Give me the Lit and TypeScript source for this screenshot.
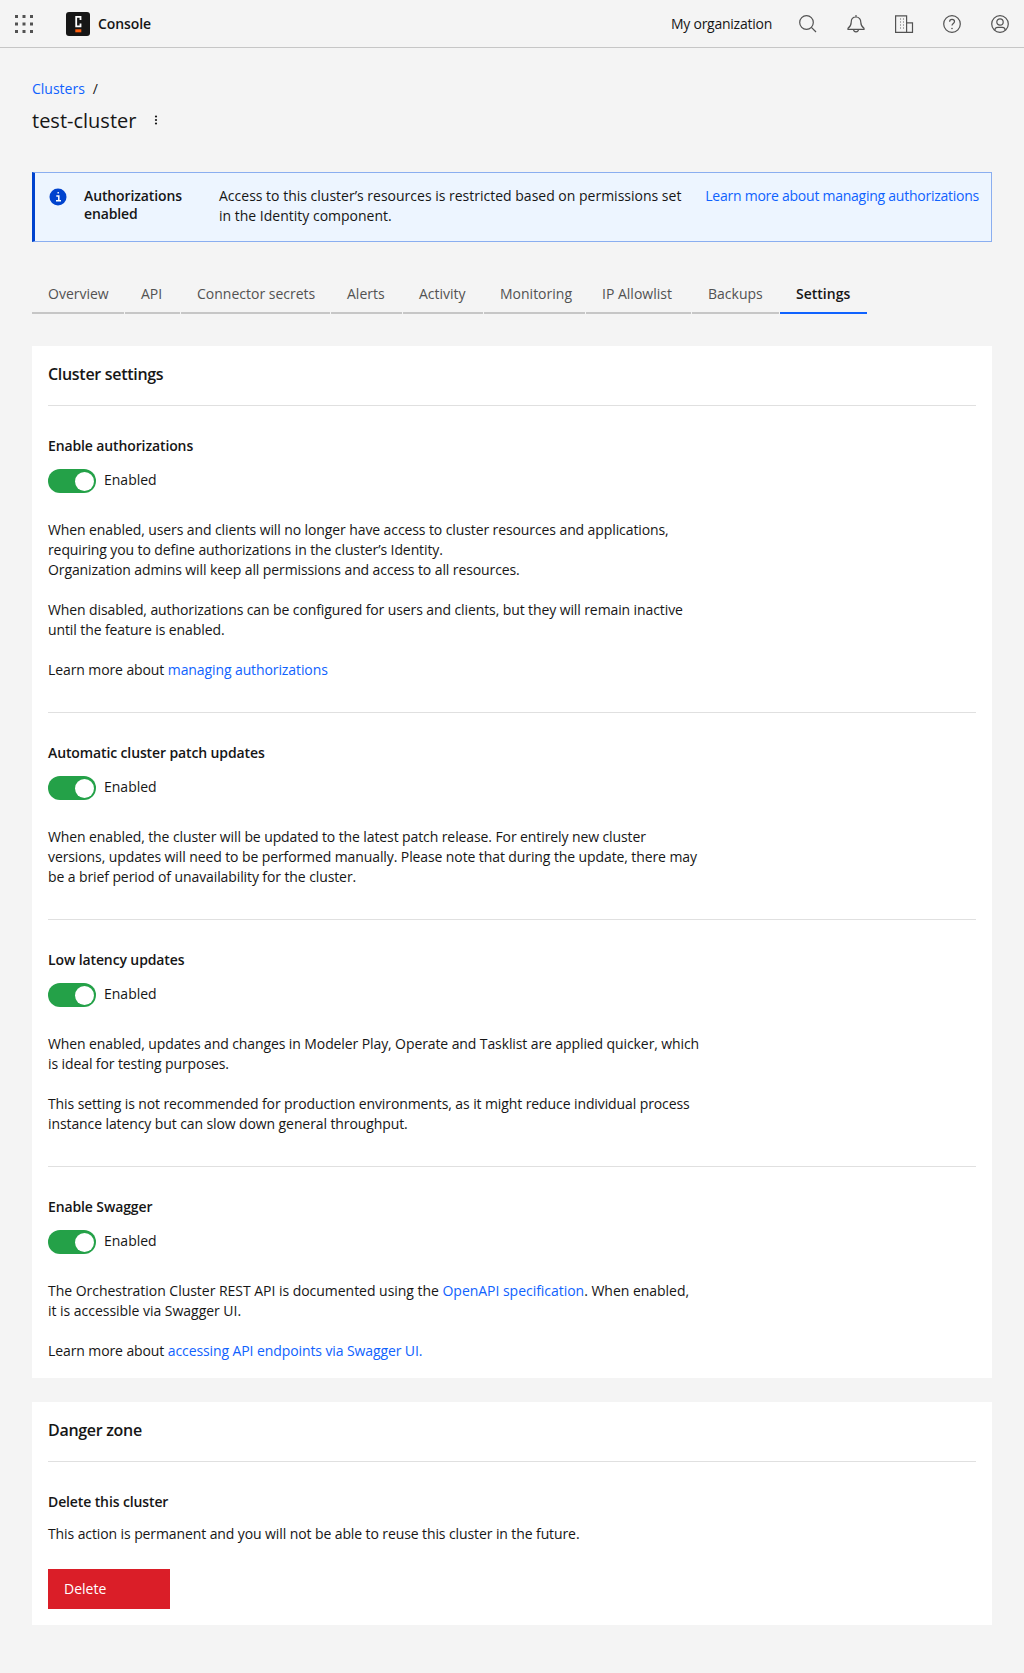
import { LitElement, html, css, svg } from "lit";
import { customElement } from "lit/decorators.js";

// tab widths are read off the reference, the fallback font does not give them
const tabs: [string, number][] = [
	["Overview", 92],
	["API", 55],
	["Connector secrets", 149],
	["Alerts", 71],
	["Activity", 80],
	["Monitoring", 101],
	["IP Allowlist", 105],
	["Backups", 87],
	["Settings", 87],
];

const icon = (body: unknown, size = 20) => html`<svg class="icon" width=${size} height=${size} viewBox="0 0 20 20" fill="none" stroke="#525252" stroke-width="1.2">${body}</svg>`;

@customElement("app-root")
export class AppRoot extends LitElement {
	static styles = css`
		:host {
			display: block;
			min-height: 100vh;
			background: #f4f4f4;
			color: #161616;
			font-family: "Open Sans", Roboto, "Liberation Sans", sans-serif;
			font-size: 14px;
			line-height: 20px;
			letter-spacing: -0.1px;
		}
		a { color: #0f62fe; text-decoration: none; }
		.topbar {
			display: flex;
			align-items: center;
			height: 47px;
			border-bottom: 1px solid #c6c6c6;
		}
		.grid-btn { width: 48px; display: flex; justify-content: center; }
		.logo {
			display: flex;
			align-items: center;
			justify-content: center;
			margin-left: 18px;
			width: 24px;
			height: 24px;
			border-radius: 3px;
			background: #161616;
		}
		.name { margin-left: 8px; font-weight: 600; }
		.spacer { flex: 1; }
		.org { margin-right: 12px; letter-spacing: -0.25px; }
		.tool { align-self: flex-start; width: 48px; height: 48px; display: flex; align-items: center; justify-content: center; }
		main { padding: 0 32px 48px; }
		.crumbs { display: flex; gap: 8px; padding-top: 31px; height: 20px; letter-spacing: 0; }
		.title-row { display: flex; align-items: center; gap: 18px; margin-top: 6px; height: 32px; }
		h1 { margin: 0; font-size: 20px; font-weight: 400; line-height: 32px; letter-spacing: 0; }
		.notice {
			display: flex;
			box-sizing: border-box;
			height: 70px;
			margin-top: 35px;
			background: #edf5ff;
			border: 1px solid #8aaef0;
			border-left: 3px solid #0043ce;
		}
		.notice .i { margin: 15px 0 0 14px; flex: none; }
		.notice b { margin: 14px 0 0 17px; width: 135px; flex: none; font-weight: 600; line-height: 18px; letter-spacing: -0.12px; }
		.notice p { margin: 13px 0 0 0; white-space: nowrap; line-height: 20px; letter-spacing: 0; }
		.notice a { margin: 13px 12px 0 auto; white-space: nowrap; letter-spacing: -0.25px; }
		.tabs { display: flex; gap: 1px; margin-top: 33px; letter-spacing: 0; }
		.tab {
			box-sizing: border-box;
			height: 39px;
			padding: 9px 0 0 16px;
			color: #525252;
			border-bottom: 2px solid #c6c6c6;
			white-space: nowrap;
		}
		.tab.active { color: #161616; font-weight: 600; border-bottom-color: #0f62fe; }
		.card { margin-top: 32px; padding: 0 16px; background: #fff; }
		.card + .card { margin-top: 24px; }
		.card-head { height: 60px; box-sizing: border-box; padding-top: 18px; border-bottom: 1px solid #e0e0e0; font-size: 16px; font-weight: 600; line-height: 20px; letter-spacing: -0.3px; }
		.section { padding: 30px 0 32px; border-bottom: 1px solid #e0e0e0; }
		.section.last { border-bottom: 0; padding-bottom: 17px; }
		.section.danger { padding-bottom: 16px; }
		h3 { margin: 0; font-size: 14px; font-weight: 600; line-height: 20px; letter-spacing: -0.12px; }
		.toggle-row { display: flex; align-items: center; gap: 8px; margin-top: 13px; height: 24px; letter-spacing: 0; }
		.toggle-row span:last-child { padding-bottom: 2px; }
		.toggle { position: relative; width: 48px; height: 24px; border-radius: 12px; background: #24a148; }
		.toggle::after { content: ""; position: absolute; right: 2.5px; top: 2.5px; width: 19px; height: 19px; border-radius: 50%; background: #fff; }
		.body { margin: 27px 0 0; white-space: nowrap; }
		.body + .body { margin-top: 20px; }
		.body.wide { letter-spacing: -0.03px; }
		.danger-text { margin: 12px 0 0; }
		.delete {
			display: block;
			width: 122px;
			height: 40px;
			box-sizing: border-box;
			margin-top: 25px;
			padding: 0 16px;
			border: 0;
			background: #da1e28;
			color: #fff;
			font: inherit;
			letter-spacing: 0;
			text-align: left;
		}
	`;

	private toggle() {
		return html`<div class="toggle-row"><span class="toggle"></span><span>Enabled</span></div>`;
	}

	render() {
		return html`
			<header class="topbar">
				<div class="grid-btn">
					<svg width="20" height="20" viewBox="0 0 20 20" fill="#525252">
						${[1, 8.5, 16].map((y) => [1, 8.5, 16].map((x) => svg`<rect x=${x} y=${y} width="3" height="3"></rect>`))}
					</svg>
				</div>
				<div class="logo">
					<svg width="12" height="20" viewBox="0 0 12 20">
						<path d="M8.500 6V2.900H4.200V12.400H8.500V9.500" fill="none" stroke="#fff" stroke-width="1.800"></path>
						<rect x="3.300" y="15.300" width="6" height="3" fill="#fc5d0d"></rect>
					</svg>
				</div>
				<span class="name">Console</span>
				<span class="spacer"></span>
				<span class="org">My organization</span>
				<span class="tool">${icon(svg`<circle cx="8.500" cy="8.500" r="6.800"></circle><path d="M13.400 13.400L18 18"></path>`)}</span>
				<span class="tool">${icon(svg`<path d="M10 1v2M10 3c-3.200 0-4.800 2.400-4.800 5.200 0 3-.9 4.400-3.200 6.100v1h16v-1c-2.300-1.700-3.200-3.100-3.200-6.100C14.800 5.400 13.200 3 10 3zM7.500 15.300a2.500 2.500 0 0 0 5 0"></path>`)}</span>
				<span class="tool">${icon(svg`<path d="M1.600 1.800h11v16.500h-11zM12.600 8.800H18.500v9.500H12.600M6 5h.9M9 5h.9M6 8h.9M9 8h.9M6 11h.9M9 11h.9M6 14h.9M9 14h.9"></path>`)}</span>
				<span class="tool">${icon(svg`<circle cx="10" cy="10" r="8.300"></circle><path d="M7.600 7.800c0-1.500 1-2.400 2.400-2.400s2.500.9 2.500 2.200c0 1.800-2.500 2-2.500 4"></path><circle cx="10" cy="14.500" r=".8" fill="#525252" stroke="none"></circle>`)}</span>
				<span class="tool">${icon(svg`<circle cx="10" cy="10" r="8.300"></circle><circle cx="10" cy="8" r="3.200"></circle><path d="M4.800 16.300c0-2 1.200-3 3-3h4.400c1.800 0 3 1 3 3"></path>`)}</span>
			</header>
			<main>
				<div class="crumbs"><a href="#">Clusters</a><span>/</span></div>
				<div class="title-row">
					<h1>test-cluster</h1>
					<svg width="4" height="12" viewBox="0 0 4 12" fill="#161616"><circle cx="2" cy="1.500" r="1.100"></circle><circle cx="2" cy="5" r="1.100"></circle><circle cx="2" cy="8.500" r="1.100"></circle></svg>
				</div>
				<div class="notice">
					<svg class="i" width="18" height="18" viewBox="0 0 18 18">
						<circle cx="9" cy="9" r="8.500" fill="#0043ce"></circle>
						<path d="M7.300 8h2.500v4.500M7 12.700h5M8.500 4.800h1.400" stroke="#fff" stroke-width="1.500" fill="none"></path>
					</svg>
					<b>Authorizations enabled</b>
					<p>Access to this cluster’s resources is restricted based on permissions set<br />in the Identity component.</p>
					<a href="#">Learn more about managing authorizations</a>
				</div>
				<nav class="tabs">
					${tabs.map(([t, w]) => html`<div class="tab ${t === "Settings" ? "active" : ""}" style="width:${w}px">${t}</div>`)}
				</nav>
				<section class="card">
					<div class="card-head">Cluster settings</div>
					<div class="section">
						<h3>Enable authorizations</h3>
						${this.toggle()}
						<p class="body">When enabled, users and clients will no longer have access to cluster resources and applications,<br />requiring you to define authorizations in the cluster’s Identity.<br />Organization admins will keep all permissions and access to all resources.</p>
						<p class="body">When disabled, authorizations can be configured for users and clients, but they will remain inactive<br />until the feature is enabled.</p>
						<p class="body">Learn more about <a href="#">managing authorizations</a></p>
					</div>
					<div class="section">
						<h3>Automatic cluster patch updates</h3>
						${this.toggle()}
						<p class="body">When enabled, the cluster will be updated to the latest patch release. For entirely new cluster<br />versions, updates will need to be performed manually. Please note that during the update, there may<br />be a brief period of unavailability for the cluster.</p>
					</div>
					<div class="section">
						<h3>Low latency updates</h3>
						${this.toggle()}
						<p class="body">When enabled, updates and changes in Modeler Play, Operate and Tasklist are applied quicker, which<br />is ideal for testing purposes.</p>
						<p class="body">This setting is not recommended for production environments, as it might reduce individual process<br />instance latency but can slow down general throughput.</p>
					</div>
					<div class="section last">
						<h3>Enable Swagger</h3>
						${this.toggle()}
						<p class="body wide">The Orchestration Cluster REST API is documented using the <a href="#">OpenAPI specification</a>. When enabled,<br />it is accessible via Swagger UI.</p>
						<p class="body">Learn more about <a href="#">accessing API endpoints via Swagger UI.</a></p>
					</div>
				</section>
				<section class="card">
					<div class="card-head">Danger zone</div>
					<div class="section last danger">
						<h3>Delete this cluster</h3>
						<p class="danger-text">This action is permanent and you will not be able to reuse this cluster in the future.</p>
						<button class="delete">Delete</button>
					</div>
				</section>
			</main>
		`;
	}
}
